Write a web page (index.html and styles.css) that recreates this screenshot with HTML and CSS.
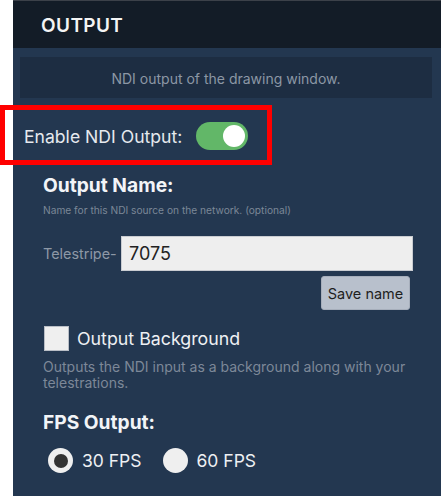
FILE: index.html
```html
<!DOCTYPE html>
<html>
<head>
<meta charset="utf-8">
<link rel="stylesheet" href="styles.css">
</head>
<body>
<div class="panel">
  <div class="header">OUTPUT</div>
  <div class="intro">NDI output of the drawing window.</div>
  <div class="enable-row">
    <span class="enable-label">Enable NDI Output:</span>
    <span class="toggle"><span class="knob"></span></span>
  </div>
  <div class="section">
    <div class="title">Output Name:</div>
    <div class="hint">Name for this NDI source on the network. (optional)</div>
    <div class="name-row">
      <span class="prefix">Telestripe-</span>
      <div class="input">7075</div>
    </div>
    <div class="save-row"><button class="save">Save name</button></div>
    <div class="check-row">
      <span class="checkbox"></span>
      <span class="check-label">Output Background</span>
    </div>
    <div class="desc">Outputs the NDI input as a background along with your telestrations.</div>
    <div class="title fps-title">FPS Output:</div>
    <div class="radio-row">
      <span class="radio on"><span class="dot"></span></span>
      <span class="radio-label">30 FPS</span>
      <span class="radio"></span>
      <span class="radio-label">60 FPS</span>
    </div>
  </div>
</div>
<div class="annot"></div>
</body>
</html>
```
FILE: styles.css
```css
html, body {
  margin: 0;
  padding: 0;
  background: #ffffff;
}
body {
  font-family: Inter, "Noto Sans", sans-serif;
  width: 441px;
  height: 496px;
  overflow: hidden;
}
.panel {
  margin-left: 13px;
  height: 496px;
  background: #233750;
}
.header {
  height: 47px;
  border-top: 1px solid #3c4149;
  background: #131c27;
  color: #f4f4f4;
  font-size: 19px;
  font-weight: 600;
  letter-spacing: 0.4px;
  padding-left: 28px;
  line-height: 50px;
  box-sizing: content-box;
}
.intro {
  margin: 9px 9px 0 7px;
  height: 41px;
  background: #1d2d42;
  color: #8c97a5;
  font-size: 14px;
  text-align: center;
  line-height: 43px;
}
.enable-row {
  display: flex;
  align-items: center;
  margin-top: 24px;
  padding-left: 11px;
  height: 28px;
}
.enable-label {
  color: #e6e9ee;
  font-size: 17.6px;
}
.toggle {
  margin-left: 14px;
  width: 52px;
  height: 28px;
  border-radius: 14px;
  background: #62b768;
  display: flex;
  align-items: center;
  justify-content: flex-end;
  padding-right: 3px;
  box-sizing: border-box;
}
.knob {
  width: 22px;
  height: 22px;
  border-radius: 50%;
  background: #ffffff;
}
.section {
  padding-left: 30px;
}
.title {
  margin-top: 24px;
  color: #f2f4f7;
  font-size: 19.2px;
  font-weight: 700;
  line-height: 22px;
}
.hint {
  margin-top: 8px;
  color: #7b8797;
  font-size: 10.2px;
  line-height: 13px;
}
.name-row {
  display: flex;
  align-items: center;
  margin-top: 19px;
}
.prefix {
  color: #8d98a6;
  font-size: 14.4px;
  width: 78px;
}
.input {
  width: 292px;
  height: 35px;
  background: #eeeeee;
  border: 1px solid #c9ccd1;
  color: #222222;
  font-size: 18px;
  line-height: 33px;
  padding-left: 7px;
  box-sizing: border-box;
}
.save-row {
  display: flex;
  justify-content: flex-end;
  padding-right: 31px;
  margin-top: 5px;
}
.save {
  width: 89px;
  height: 34px;
  background: #b8c0cc;
  border: 1px solid #a6aebb;
  border-radius: 3px;
  color: #1e1e1e;
  font-family: Inter, "Noto Sans", sans-serif;
  font-size: 14.5px;
  padding: 0;
}
.check-row {
  display: flex;
  align-items: center;
  margin-top: 16px;
  padding-left: 1px;
}
.checkbox {
  width: 25px;
  height: 25px;
  background: #efefef;
  border: 1px solid #b9bec6;
  box-sizing: border-box;
}
.check-label {
  margin-left: 8px;
  color: #eef0f3;
  font-size: 17.8px;
}
.desc {
  margin-top: 8px;
  color: #7d8898;
  font-size: 14px;
  line-height: 16px;
  padding-right: 24px;
}
.fps-title {
  margin-top: 20px;
}
.radio-row {
  display: flex;
  align-items: center;
  margin-top: 15px;
  padding-left: 5px;
}
.radio {
  width: 25px;
  height: 25px;
  border-radius: 50%;
  background: #efefef;
  display: flex;
  align-items: center;
  justify-content: center;
}
.dot {
  width: 14px;
  height: 14px;
  border-radius: 50%;
  background: #333333;
}
.radio-label {
  margin-left: 9px;
  margin-right: 21px;
  color: #eef0f3;
  font-size: 17.5px;
}
.annot {
  position: absolute;
  left: 0;
  top: 105px;
  width: 272px;
  height: 60px;
  border: 5px solid #ff0000;
  box-sizing: border-box;
}
```
